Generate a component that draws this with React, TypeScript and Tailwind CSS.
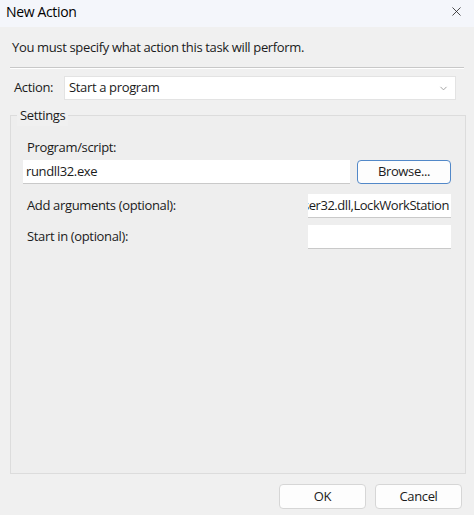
import { ChevronDown, X } from "lucide-react";

function Field({ value, className }: { value?: string; className: string }) {
  return (
    <div
      className={`h-[24px] bg-white border-b border-[#c9c9c9] flex items-center px-[3px] overflow-hidden whitespace-nowrap ${className}`}
    >
      {value}
    </div>
  );
}

export default function App() {
  return (
    <div
      className="w-[474px] h-[515px] bg-[#f0f0f0] text-[13px] tracking-[-0.35px] text-[#1b1b1b] flex flex-col overflow-hidden"
      style={{ fontFamily: '"Open Sans", "Noto Sans", sans-serif' }}
    >
      {/* title bar */}
      <div className="h-[27px] bg-[#f4f6fb] flex items-start justify-between pl-[6px] pr-[10px] pt-[1px]">
        <span className="text-[14px] text-black">New Action</span>
        <X size={15} strokeWidth={1.3} className="text-[#222] mt-[3px]" />
      </div>

      <div className="flex flex-col px-[10px] pt-[12px]">
        <div className="px-[2px] h-[18px] flex items-center">
          You must specify what action this task will perform.
        </div>
        <div className="mt-[10px] h-[2px] bg-[#c8c8c8] border-b border-white" />

        <div className="mt-[7px] flex items-center h-[24px]">
          <span className="w-[54px] pl-[4px]">Action:</span>
          <div className="w-[392px] h-[24px] bg-white border border-[#e3e3e3] flex items-center justify-between pl-[4px] pr-[6px]">
            <span>Start a program</span>
            <ChevronDown size={11} className="text-[#9a9a9a]" />
          </div>
        </div>

        {/* settings group */}
        <div className="relative mt-[15px] h-[359px] w-[456px] border border-[#dcdcdc] bg-[#eeeeee] flex flex-col pl-[12px] pr-[14px] pt-[23px]">
          <span className="absolute -top-[10px] left-[6px] px-[3px] bg-[#f0f0f0]">Settings</span>
          <div className="pl-[4px] h-[18px] flex items-center">Program/script:</div>
          <div className="mt-[3px] flex items-center justify-between">
            <Field value="rundll32.exe" className="w-[327px]" />
            <button className="w-[94px] h-[24px] rounded-[4px] border border-[#5288c8] bg-[#fdfdfd] text-[13px]">
              Browse...
            </button>
          </div>
          <div className="mt-[10px] flex items-center justify-between">
            <span className="pl-[4px]">Add arguments (optional):</span>
            <Field value="user32.dll,LockWorkStation" className="w-[143px] justify-end tracking-[-0.45px] !pr-[2px]" />
          </div>
          <div className="mt-[7px] flex items-center justify-between">
            <span className="pl-[4px]">Start in (optional):</span>
            <Field className="w-[143px]" />
          </div>
        </div>
      </div>

      <div className="mt-auto mb-[6px] flex justify-end gap-[9px] pr-[12px]">
        <button className="w-[87px] h-[25px] rounded-[4px] border border-[#d6d6d6] bg-[#fdfdfd]">OK</button>
        <button className="w-[87px] h-[25px] rounded-[4px] border border-[#d6d6d6] bg-[#fdfdfd]">Cancel</button>
      </div>
    </div>
  );
}
